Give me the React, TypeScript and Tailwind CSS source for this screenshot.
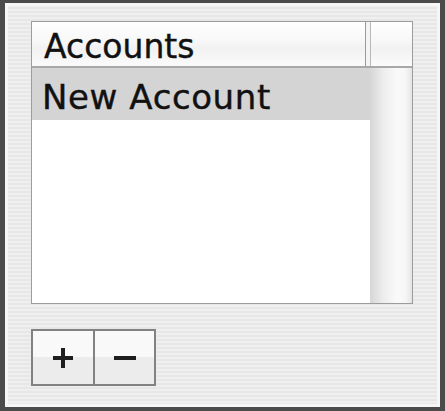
import React from 'react';

const font = { fontFamily: '"DejaVu Sans", "Liberation Sans", sans-serif' };

function PlusIcon() {
  return (
    <svg width="22" height="22" viewBox="0 0 22 22">
      <path d="M11 1v20M1 11h20" stroke="#1e1e1e" strokeWidth="4" />
    </svg>
  );
}

function MinusIcon() {
  return (
    <svg width="24" height="22" viewBox="0 0 24 22">
      <path d="M1 11h22" stroke="#1e1e1e" strokeWidth="4" />
    </svg>
  );
}

export default function App() {
  return (
    <div
      className="w-[445px] h-[411px] border-l-[5px] border-r-[5px] border-t-[3px] border-b-[4px] border-[#4b4b4b]"
      style={font}
    >
      <div className="h-full w-full pl-[26px] pt-[18px] bg-[repeating-linear-gradient(0deg,#efefef_0px,#efefef_2px,#e7e7e7_2px,#e7e7e7_4px)] shadow-[inset_0_0_0_3px_#f6f6f6]">
        {/* table */}
        <div className="flex h-[283px] w-[382px] flex-col border border-[#9c9c9c] bg-white">
          <div className="flex h-[46px] border-b-2 border-[#a8a8a8] bg-[linear-gradient(to_bottom,#ffffff,#f7f7f7_45%,#f1f1f1_60%,#fbfbfb)]">
            <div className="flex flex-1 items-center border-r border-[#9a9a9a] pl-[12px] pt-[4px] text-[33px] leading-none text-[#111] [-webkit-text-stroke:0.4px_#111]">
              Accounts
            </div>
            <div className="w-[46px] border-l-[4px] border-l-[#f4f4f4] shadow-[inset_1px_0_0_#b8b8b8]" />
          </div>
          <div className="flex flex-1">
            <div className="flex-1">
              <div className="flex h-[52px] items-center bg-[#d4d4d4] pl-[10px] pt-[5px] text-[34px] leading-none tracking-[0.6px] text-[#111] [-webkit-text-stroke:0.4px_#111]">
                New Account
              </div>
            </div>
            <div className="w-[42px] bg-[linear-gradient(to_right,#d6d6d6,#ececec_30%,#fafafa_65%,#f6f6f6_85%,#e4e4e4)]" />
          </div>
        </div>

        {/* add / remove buttons */}
        <div className="mt-[25px] flex h-[57px] w-[125px] border-2 border-[#828282]">
          <button className="flex w-[60px] items-center justify-center bg-[linear-gradient(to_bottom,#f9f9f9_50%,#ececec_50%)]">
            <PlusIcon />
          </button>
          <button className="flex flex-1 items-center justify-center border-l-2 border-[#828282] bg-[linear-gradient(to_bottom,#f9f9f9_50%,#ececec_50%)]">
            <MinusIcon />
          </button>
        </div>
      </div>
    </div>
  );
}
